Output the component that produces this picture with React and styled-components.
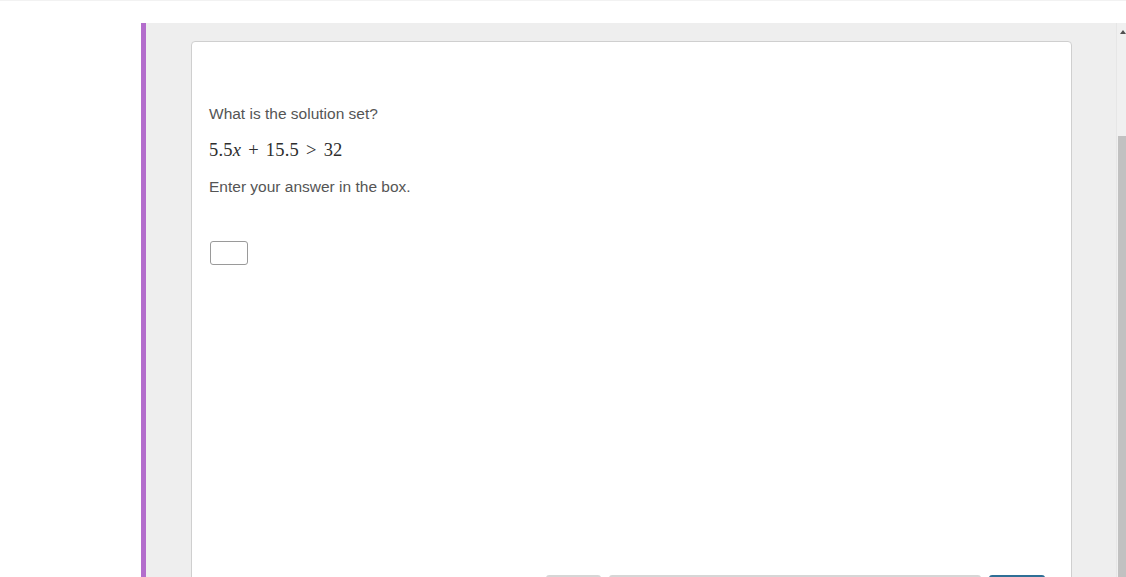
import React from 'react'
import styled, { createGlobalStyle } from 'styled-components'

const Global = createGlobalStyle`
  html, body {
    margin: 0;
    padding: 0;
    height: 577px;
    overflow: hidden;
    background: #ffffff;
  }
  #root {
    height: 100%;
  }
`

const Page = styled.div`
  display: flex;
  flex-direction: column;
  height: 577px;
  overflow: hidden;
`

const TopBar = styled.div`
  flex: 0 0 23px;
  background: #ffffff;
  border-top: 1px solid #f2f2f2;
  box-sizing: border-box;
`

const Body = styled.div`
  flex: 1 1 auto;
  display: flex;
  min-height: 0;
`

const Gutter = styled.div`
  flex: 0 0 141px;
  background: #ffffff;
`

const Stage = styled.div`
  flex: 1 1 auto;
  display: flex;
  min-height: 0;
  overflow: hidden;
  border-left: 5px solid #b36dcc;
  background: #eeeeee;
`

const Content = styled.div`
  flex: 1 1 auto;
  padding: 18px 44px 0 45px;
  min-height: 0;
`

const Card = styled.div`
  background: #ffffff;
  border: 1px solid #cfcfcf;
  border-radius: 4px;
  padding: 62px 17px 0 17px;
  box-sizing: border-box;
  height: 581px;
  display: flex;
  flex-direction: column;
`

const Prompt = styled.p`
  margin: 0 0 16px 0;
  font-family: "Liberation Sans", Arial, sans-serif;
  font-size: 15.5px;
  line-height: 20px;
  color: #555555;
`

const MathLine = styled.p`
  margin: 0 0 17px 0;
  font-family: "Liberation Serif", "Times New Roman", serif;
  font-size: 18.5px;
  line-height: 20px;
  color: #2e2e2e;
  letter-spacing: 0.2px;
`

const Var = styled.i`
  font-style: italic;
`

const Op = styled.span`
  margin: 0 ${p => p.gap}px;
`

const AnswerBox = styled.input`
  margin-top: 28px;
  width: 38px;
  height: 24px;
  box-sizing: border-box;
  border: 1px solid #9a9a9a;
  border-radius: 3px;
  margin-left: 1px;
  outline: none;
`

const Spacer = styled.div`
  flex: 1 1 auto;
`

const Footer = styled.div`
  display: flex;
  align-items: flex-start;
  gap: 8px;
  padding-left: 337px;
  height: 46px;
  flex: 0 0 auto;
`

const FooterButton = styled.div`
  width: ${p => p.w}px;
  height: 34px;
  border-radius: 3px;
  box-sizing: border-box;
  border-top: 2px solid ${p => (p.primary ? '#2f6f96' : '#d6d6d6')};
  background: ${p => (p.primary ? '#3a7fab' : '#f4f4f4')};
`

const Scrollbar = styled.div`
  flex: 0 0 9px;
  display: flex;
  flex-direction: column;
  background: #f0f0f0;
  border-left: 1px solid #e6e6e6;
`

const ArrowCell = styled.div`
  height: 11px;
  display: flex;
  align-items: flex-end;
  justify-content: flex-end;
`

const Track = styled.div`
  height: 102px;
`

const Thumb = styled.div`
  flex: 1 1 auto;
  margin-left: 1px;
  background: #c1c1c1;
`

const App = () => {
  return (<Page>
    <Global />
    <TopBar />
    <Body>
      <Gutter />
      <Stage>
        <Content>
          <Card>
            <Prompt>What is the solution set?</Prompt>
            <MathLine>
              5.5<Var>x</Var>
              <Op gap={7}>+</Op>15.5
              <Op gap={7}>&gt;</Op>32
            </MathLine>
            <Prompt>Enter your answer in the box.</Prompt>
            <div><AnswerBox /></div>
            <Spacer />
            <Footer>
              <FooterButton w={55} />
              <FooterButton w={372} />
              <FooterButton w={56} primary />
            </Footer>
          </Card>
        </Content>
        <Scrollbar>
          <ArrowCell>
            <svg width="6" height="4" viewBox="0 0 6 4">
              <path d="M3 0 L6 4 L0 4 Z" fill="#505050" />
            </svg>
          </ArrowCell>
          <Track />
          <Thumb />
        </Scrollbar>
      </Stage>
    </Body>
  </Page>)
}

export default App
